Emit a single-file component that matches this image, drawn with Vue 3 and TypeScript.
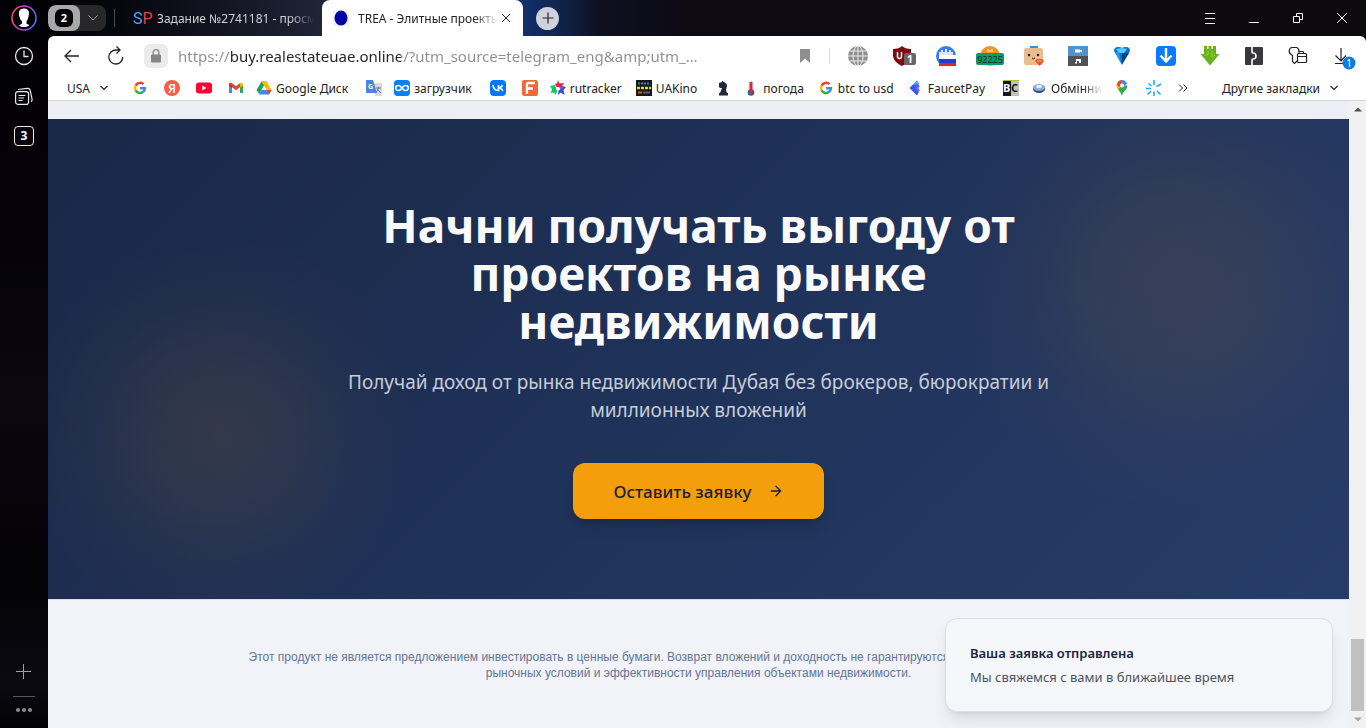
<script setup lang="ts">
import { ref } from 'vue'

const address = ref('https://buy.realestateuae.online/?utm_source=telegram_eng&amp;utm_…')
const headline = ['Начни получать выгоду от', 'проектов на рынке', 'недвижимости']
const lead = ['Получай доход от рынка недвижимости Дубая без брокеров, бюрократии и', 'миллионных вложений']
const toastOpen = ref(true)
</script>

<template>
  <div class="browser">
    <aside class="rail">
      <button class="rail-btn avatar" aria-label="Профиль">
        <svg width="28" height="28" viewBox="0 0 28 28">
          <defs>
            <linearGradient id="ring" x1="0" y1="0.3" x2="1" y2="0.6">
              <stop offset="0" stop-color="#ff4b55" /><stop offset="0.5" stop-color="#c03be8" /><stop offset="1" stop-color="#4b6cff" />
            </linearGradient>
          </defs>
          <circle cx="14" cy="14" r="12" fill="#000" stroke="url(#ring)" stroke-width="1.6" />
          <path d="M9 8c.4-2.500 2.500-3.500 5-3.500 3.200 0 5 1.500 5 4.500 0 1.500-.3 2.500-.6 3.700-.3 2-.7 3.300-1.700 4l-.2 3 2.800 1.300c-1 1.500-2.800 2-5.300 2-2.200 0-4-.4-5-1.800l3-1.500v-2.500c-1.200-.8-2-2-2.200-3.700C9 12 8.700 10 9 8z" fill="#fff" />
        </svg>
      </button>
      <button class="rail-btn" aria-label="История">
        <svg width="20" height="20" viewBox="0 0 20 20" fill="none" stroke="#e8e8ea" stroke-width="1.300"><circle cx="10" cy="10" r="8.500" /><path d="M10 4.500V10.500H14.500" /></svg>
      </button>
      <button class="rail-btn" aria-label="Коллекции">
        <svg width="20" height="20" viewBox="0 0 20 20" fill="none" stroke="#e8e8ea" stroke-width="1.200"><rect x="1.600" y="5.600" width="13" height="12.800" rx="2.500" /><path d="M4.500 9.500h7M4.500 12h5.500M4.500 14.500h4" /><path d="M4 3.500l9.500-1.200q2-.2 2.600 1.600l2 9.500q.2 1.600-1 2.400" /></svg>
      </button>
      <button class="rail-btn" aria-label="Вкладки: 3"><span class="tab-count">3</span></button>
      <span class="rail-space"></span>
      <button class="rail-btn" aria-label="Добавить">
        <svg width="16" height="16" viewBox="0 0 16 16" stroke="#a0a0a4"><path d="M7.500 0v15M0 7.500h15" /></svg>
      </button>
      <span class="rail-line"></span>
      <button class="rail-more" aria-label="Ещё"><i></i><i></i><i></i></button>
    </aside>

    <div class="main">
      <header class="tabs">
        <div class="group">
          <button class="group-num" aria-label="Группа вкладок 2"><span>2</span></button>
          <button class="group-arrow" aria-label="Список групп"><svg width="10" height="6" viewBox="0 0 10 6" fill="none" stroke="#a5a5a8"><path d="M.5 .5L5 5L9.500 .5" /></svg></button>
        </div>
        <span class="tabs-sep"></span>
        <a class="tab" href="#task"><b class="sp"><i>S</i>P</b><span class="tab-name">Задание №2741181 - просмотр</span></a>
        <a class="tab active" href="#page">
          <svg class="tab-ico" width="16" height="16" viewBox="0 0 16 16"><path fill="#f3f3f3" d="M0 0h16v16H0z" /><ellipse cx="8" cy="8" rx="6.500" ry="7.500" fill="#0303a5" /></svg>
          <span class="tab-name">TREA - Элитные проекты</span>
          <button class="tab-close" aria-label="Закрыть вкладку"><svg width="10" height="10" viewBox="0 0 10 10" stroke="#222"><path d="M1 1l8 8M9 1L1 9" /></svg></button>
        </a>
        <button class="newtab" aria-label="Новая вкладка"><svg width="12" height="12" viewBox="0 0 12 12" stroke="#222" stroke-width="1.200"><path d="M6 .5v11M.5 6h11" /></svg></button>
        <div class="window">
          <button aria-label="Меню"><svg width="12" height="12" viewBox="0 0 12 12" stroke="#eee"><path d="M1 1.500h10M1 6.500h10M1 11.500h10" /></svg></button>
          <button aria-label="Свернуть"><svg width="12" height="12" viewBox="0 0 12 12" stroke="#fff"><path d="M1 10.500h10" /></svg></button>
          <button aria-label="Восстановить"><svg width="12" height="12" viewBox="0 0 12 12" fill="none" stroke="#fff"><path d="M1.500 4.500h6v6h-6zM4.500 4V1.500h6v6H8" /></svg></button>
          <button aria-label="Закрыть"><svg width="12" height="12" viewBox="0 0 12 12" stroke="#fff"><path d="M1 1l10 10M11 1L1 11" /></svg></button>
        </div>
      </header>

      <div class="chrome">
        <div class="toolbar">
          <button class="nav" aria-label="Назад"><svg width="16" height="14" viewBox="0 0 16 14" fill="none" stroke="#222" stroke-width="1.300"><path d="M15 7H1.500M7 1L1 7l6 6" /></svg></button>
          <button class="nav" aria-label="Обновить"><svg width="18" height="20" viewBox="0 0 18 20" fill="none" stroke="#222" stroke-width="1.300"><path d="M15.800 11A7 7 0 1 1 9 4h4M9.500 .5L13 4L9.500 7.500" /></svg></button>
          <button class="lock" aria-label="Сведения о сайте"><svg width="12" height="14" viewBox="0 0 12 14"><path d="M3.200 6V3.500a2.800 2.800 0 0 1 5.600 0V6" fill="none" stroke="#858585" stroke-width="1.300" /><rect x="1" y="5.500" width="10" height="8" rx="1.200" fill="#858585" /></svg></button>
          <input v-model="address" class="address" type="text" aria-label="Адрес страницы" spellcheck="false" />
          <button class="ext" aria-label="Добавить в закладки"><svg width="12" height="14" viewBox="0 0 12 14"><path d="M1 0h10v14L6 9.500 1 14z" fill="#8e8e8e" /></svg></button>
          <span class="bar-sep"></span>
          <div class="exts">
            <button class="ext" aria-label="Сеть"><svg width="20" height="20" viewBox="0 0 20 20"><circle cx="10" cy="10" r="10" fill="#8f8f8f" /><g fill="none" stroke="#eee"><path d="M0 10h20M10 0v20M2 5h16M2 15h16" /><ellipse cx="10" cy="10" rx="5" ry="10" /></g></svg></button>
            <button class="ext" aria-label="uBlock: 1"><svg width="28" height="20" viewBox="0 0 28 20"><path d="M5 3q6 0 9-3 3 3 9 3v6c0 5-4 8.500-9 11C9 17.500 5 14 5 9z" fill="#800610" /><path d="M9.500 6v4.500q0 2 2 2t2-2V6" fill="none" stroke="#fff" stroke-width="1.500" /><rect x="16" y="7" width="12" height="12" rx="2" fill="#666" /><text x="22" y="17" text-anchor="middle" fill="#fff" font-size="11" font-weight="700">1</text></svg></button>
            <button class="ext" aria-label="VPN"><svg width="20" height="20" viewBox="0 0 20 20"><circle cx="10" cy="10" r="10" fill="#397bea" /><path d="M3 6h2V4h2v2h2V3h2v3h2V4h2v2h2v4H3z" fill="#d9e7fa" /><path fill="#fff" d="M3 9h17v4H3z" /><path fill="#243fc2" d="M3 13h17v4H3z" /><path fill="#e5232c" d="M3 17h17v3H3z" /></svg></button>
            <button class="ext" aria-label="Курс: 92225"><svg width="28" height="20" viewBox="0 0 28 20"><circle cx="14" cy="10" r="10" fill="#f6921d" /><path d="M12 3v3M14 4v2M16 3v3" stroke="#fff" /><rect y="7" width="28" height="12" rx="2" fill="#0a9b6c" /><text x="14" y="17" text-anchor="middle" fill="#082820" font-size="9">92225</text></svg></button>
            <button class="ext" aria-label="Помощник"><svg width="20" height="20" viewBox="0 0 20 20"><path d="M6 3V0h8v3" fill="#2a91f2" /><rect y="2" width="19" height="17" rx="2" fill="#e9bd92" /><circle cx="5" cy="9" r="1.200" fill="#222" /><circle cx="14" cy="9" r="1.200" fill="#222" /><path d="M8 12q1.500 1.500 3 0" stroke="#222" fill="none" /><path d="M11 15l2-2h5l2 2-4.500 5z" fill="#e65428" /><path d="M13 15h5" stroke="#ffbe7b" /></svg></button>
            <button class="ext" aria-label="Медиа"><svg width="20" height="20" viewBox="0 0 20 20"><path fill="#5391cb" d="M0 0h20v10H0z" /><path fill="#505355" d="M0 10h20v10H0z" /><path d="M7 3.500h5v1L14 3.500v3l-2-1v1H7zM8 13h5v4h-2v-2H9v2.500H7V16h1z" fill="#fff" /></svg></button>
            <button class="ext" aria-label="Алмаз"><svg width="18" height="20" viewBox="0 0 18 20"><path d="M1 5q0-4 4-4 3 0 4 1 1-1 4-1 4 0 4 4L9 19z" fill="#0872cf" /><path d="M3 3l6-1 5 1-3 4H6z" fill="#55cdfa" /><path d="M9 7h7L9 18z" fill="#064385" /><path d="M2 6l6 10L6 7z" fill="#12a8f5" /></svg></button>
            <button class="ext" aria-label="Загрузчик"><svg width="20" height="20" viewBox="0 0 20 20"><rect width="20" height="20" rx="4" fill="#087bff" /><path d="M10 2v13M4.500 9.500L10 15.500l5.500-6" fill="none" stroke="#fff" stroke-width="2.400" /></svg></button>
            <button class="ext" aria-label="Скачать видео"><svg width="20" height="20" viewBox="0 0 20 20"><path d="M4 0h3v3h1.500V0h3v3H13V0h3v8h3.500L10 19.500 .5 8H4z" fill="#67b51b" /><path d="M5 9h3V5M12 5v6l3-2" fill="none" stroke="#8fd33b" /></svg></button>
            <button class="ext" aria-label="Разделитель"><svg width="20" height="20" viewBox="0 0 20 20"><rect x="1" y="1" width="18" height="18" rx="1" fill="#39393b" /><path d="M8 1v5q0 1 1 1 3 0 3 3t-3 3q-1 0-1 1v5" fill="none" stroke="#fff" stroke-width="1.600" /></svg></button>
            <button class="ext" aria-label="Пароли"><svg width="20" height="20" viewBox="0 0 20 20" fill="none" stroke="#222" stroke-width="1.200"><path d="M9 15l-2.500 2.500-2-2V9.500C1.500 8 .8 5.500 1.500 3.500 2 2 3 1.500 4 1.500h4.500q2.500 .5 2.500 4" /><rect x="9.500" y="7.500" width="9" height="9" rx="1" /><path d="M9.500 10.500h9M11 7.500V5.500h4l1 2" /></svg></button>
            <button class="ext" aria-label="Загрузки: 1"><svg width="32" height="28" viewBox="0 0 32 28"><path d="M15 6v13M9.500 13.500L15 19l5-5.500M9 21.500h9" fill="none" stroke="#222" stroke-width="1.200" /><circle cx="23" cy="21" r="6.500" fill="#0a7be0" /><text x="23" y="25" text-anchor="middle" fill="#fff" font-size="10">1</text></svg></button>
          </div>
        </div>

        <nav class="bookmarks" aria-label="Закладки">
          <button class="folder usa">USA<svg width="8" height="6" viewBox="0 0 8 6" fill="none" stroke="#222" stroke-width="1.200"><path d="M.5 1L4 4.500 7.500 1" /></svg></button>
          <a class="bm" href="#g" aria-label="Google"><svg width="16" height="16" viewBox="0 0 16 16" fill="none" stroke-width="2.500"><path d="M11.500 4.200A5 5 0 0 0 3.600 5.600" stroke="#ea4335" /><path d="M3.600 5.600a5 5 0 0 0 0 4.800" stroke="#fbbc05" /><path d="M3.600 10.400a5 5 0 0 0 7.600 1.400" stroke="#34a853" /><path d="M11.200 11.800q1.600-1.300 1.700-3.500H8" stroke="#4285f4" /></svg></a>
          <a class="bm" href="#ya" aria-label="Яндекс"><svg width="16" height="16" viewBox="0 0 16 16"><circle cx="8" cy="8" r="8" fill="#fc5b45" /><text x="8" y="12.500" text-anchor="middle" fill="#fff" font-size="12" font-weight="600">Я</text></svg></a>
          <a class="bm" href="#yt" aria-label="YouTube"><svg width="16" height="16" viewBox="0 0 16 16"><rect y="2.500" width="16" height="11" rx="3" fill="#ff0033" /><path d="M6.300 5.500L10.500 8l-4.200 2.500z" fill="#fff" /></svg></a>
          <a class="bm" href="#gm" aria-label="Gmail"><svg width="16" height="16" viewBox="0 0 16 16"><path d="M1 4v9h3V6z" fill="#4285f4" /><path d="M12 6v7h3V4z" fill="#34a853" /><path d="M1 3.500q1-1.500 2.800-.5L8 6.300 12.200 3v4L8 10.200 1 5z" fill="#ea4335" /><path d="M12 3q2-1 3 1v1.500l-3 2z" fill="#fbbc04" /><path d="M1 4l3 2v2L1 5.500z" fill="#c5221f" /></svg></a>
          <a class="bm wide" href="#drive"><svg width="16" height="16" viewBox="0 0 16 16"><path d="M5.500 1.500h5L3.200 14 .5 10z" fill="#1da35c" /><path d="M5.500 1.500h5l5 8.500h-5z" fill="#ffba00" /><path d="M5.500 10h10L13 14.500H3z" fill="#4285f4" /><path d="M10.500 10h5L13 14.500z" fill="#ea4335" /><path d="M8 6l2.500 4h-5z" fill="#fff" /></svg>Google Диск</a>
          <a class="bm" href="#tr" aria-label="Переводчик"><svg width="16" height="16" viewBox="0 0 16 16"><path d="M6 3h10v13H9z" fill="#d8dadd" /><path d="M10 8h5M12.500 7v1q-.5 3-2.500 4M11 9l4 4" stroke="#65758b" fill="none" /><path d="M0 0h7l4 13H1q-1 0-1-1z" fill="#4a83ee" /><text x="2" y="9" font-size="7" font-weight="700" fill="#fff">G</text></svg></a>
          <a class="bm wide" href="#dl"><svg width="16" height="16" viewBox="0 0 16 16"><rect width="16" height="16" rx="3.500" fill="#087ff5" /><path d="M8 8Q6 5.200 4.200 5.500A2.500 2.500 0 0 0 4.200 10.500Q6 10.800 8 8t3.800-2.500a2.500 2.500 0 0 1 0 5Q10 10.800 8 8" fill="none" stroke="#fff" stroke-width="1.600" /></svg>загрузчик</a>
          <a class="bm" href="#vk" aria-label="ВКонтакте"><svg width="16" height="16" viewBox="0 0 16 16"><rect width="16" height="16" rx="4" fill="#07f" /><path d="M3 5q.5 5.500 5.500 5.500V5M8.500 8Q11 8 12.500 5M8.500 8q3 0 4.300 2.800" fill="none" stroke="#fff" stroke-width="1.700" /></svg></a>
          <a class="bm" href="#f" aria-label="F"><svg width="16" height="16" viewBox="0 0 16 16"><rect width="16" height="16" rx="2" fill="#f26938" /><path d="M5 14V4q0-1 1-1h7M5 8.500h6" fill="none" stroke="#fff" stroke-width="2.300" /></svg></a>
          <a class="bm wide" href="#rt"><svg width="16" height="16" viewBox="0 0 16 16"><path d="M8 0l1.500 3.500L14 3l-2.500 4h-5L5 3.500l2 0z" fill="#e52344" /><path d="M0 6l5-1 1.500 4 1 2-2 3.500-2-2-3 .5 1.500-3.500z" fill="#19c85c" /><path d="M10 7l2-1 4 1-2.500 3 1 5-4-2.500L8 15l.5-4z" fill="#2f50c7" /><path d="M6.500 7h3l1 2-2.500 2-2-1.500z" fill="#fff" /><path d="M10 6l3 1-2 3-2-3z" fill="#a843ce" /></svg>rutracker</a>
          <a class="bm wide" href="#uk"><svg width="16" height="16" viewBox="0 0 16 16"><path fill="#171717" d="M0 0h16v16H0z" /><path d="M2 3.500h12" stroke="#1688d0" stroke-width="2" stroke-dasharray="2 1" /><path d="M1 8h14" stroke="#f3d414" stroke-width="2.500" stroke-dasharray="3 1" /><path d="M2 12.500h4" stroke="#d25d1a" stroke-width="2" /><path d="M7 12.500h7" stroke="#56636b" stroke-width="2" /></svg>UAKino</a>
          <a class="bm" href="#chess" aria-label="Шахматы"><svg width="16" height="16" viewBox="0 0 16 16"><path d="M4 3l3-1V.5L9 2q3 1 3 4l-1 4 1 3h1v2.500H4V13h1l2-5H5L4 7z" fill="#24283a" /></svg></a>
          <a class="bm wide" href="#weather"><svg width="16" height="16" viewBox="0 0 16 16"><rect x="5.500" y="1" width="5" height="11" rx="2.500" fill="#b9d8f0" /><circle cx="8" cy="12.500" r="3.300" fill="#1466b5" /><path d="M8 2v10" stroke="#e22a28" stroke-width="2.600" /><circle cx="8" cy="12.300" r="2" fill="#e22a28" /></svg>погода</a>
          <a class="bm wide" href="#btc"><svg width="16" height="16" viewBox="0 0 16 16" fill="none" stroke-width="2.500"><path d="M11.500 4.200A5 5 0 0 0 3.600 5.600" stroke="#ea4335" /><path d="M3.600 5.600a5 5 0 0 0 0 4.800" stroke="#fbbc05" /><path d="M3.600 10.400a5 5 0 0 0 7.600 1.400" stroke="#34a853" /><path d="M11.200 11.800q1.600-1.300 1.700-3.500H8" stroke="#4285f4" /></svg>btc to usd</a>
          <a class="bm wide" href="#fp"><svg width="16" height="16" viewBox="0 0 16 16"><path d="M9 .5L1.500 8 9 15.500l1.500-3V3z" fill="#3657ed" /><path d="M9 .5L5 5l6-1z" fill="#35b9f6" /><path d="M7 8l3-3.500L12 6l-2 2.300 2 2L10 12z" fill="#6f63f7" /></svg>FaucetPay</a>
          <a class="bm" href="#bc" aria-label="BC"><svg width="16" height="16" viewBox="0 0 16 16"><path fill="#16191b" d="M0 0h8v16H0z" /><path fill="#bfc2b9" d="M8 0h8v16H8z" /><path d="M0 .5h16" stroke="#a5c42d" /><text x="0" y="12" font-size="11" font-weight="700" fill="#fff">B</text><text x="8" y="12" font-size="11" font-weight="700" fill="#111">C</text></svg></a>
          <a class="bm wide rate" href="#ex"><svg width="16" height="16" viewBox="0 0 16 16"><ellipse cx="8" cy="9" rx="6" ry="4" fill="#35467f" /><ellipse cx="8" cy="7.500" rx="6" ry="3.500" fill="#8ba9dd" /><ellipse cx="8" cy="6.500" rx="3" ry="1.800" fill="#e2edfb" /></svg><span class="cut">Обмінник</span></a>
          <a class="bm" href="#maps" aria-label="Карты"><svg width="16" height="16" viewBox="0 0 16 16"><path d="M8 16q-1-3-3-5.500T2.500 5.500h11q0 3-2.500 5T8 16z" fill="#34a853" /><path d="M2.500 5.500A5.500 5.500 0 0 1 8 0v5.500L4 9.500Q2.500 7.500 2.500 5.500z" fill="#fbbc04" /><path d="M3.800 2A5.500 5.500 0 0 1 8 0l1 4-4 3-2-2z" fill="#ea4335" /><path d="M8 0a5.500 5.500 0 0 1 5 3.500L9 7 7 4z" fill="#4285f4" /><circle cx="8" cy="5.500" r="2" fill="#fff" /></svg></a>
          <a class="bm" href="#spark" aria-label="Искра"><svg width="16" height="16" viewBox="0 0 16 16" stroke="#25a9ff" stroke-width="1.600"><path d="M8 0v5M8 11.500V16M0 8.500h5M11 11l3.500 3.500M5 11l-3.500 3.500M10.500 6.500L15 4M5.500 6L2.500 3.500" /></svg></a>
          <button class="folder more" aria-label="Ещё закладки"><svg width="10" height="8" viewBox="0 0 10 8" fill="none" stroke="#222"><path d="M1 .5L4.500 4 1 7.500M5.500 .5L9 4 5.500 7.500" /></svg></button>
          <button class="folder other">Другие закладки<svg width="8" height="6" viewBox="0 0 8 6" fill="none" stroke="#222" stroke-width="1.200"><path d="M.5 1L4 4.500 7.500 1" /></svg></button>
        </nav>
      </div>

      <div class="view">
        <main class="page">
          <section class="hero">
            <h1><span v-for="line in headline" :key="line">{{ line }}</span></h1>
            <p><span v-for="line in lead" :key="line">{{ line }}</span></p>
            <button class="cta">Оставить заявку<svg width="16" height="16" viewBox="0 0 24 24" fill="none" stroke="currentColor" stroke-width="2" stroke-linecap="round" stroke-linejoin="round"><path d="M5 12h14M12 5l7 7-7 7" /></svg></button>
          </section>
          <footer class="legal">
            <p>
              <span>Этот продукт не является предложением инвестировать в ценные бумаги. Возврат вложений и доходность не гарантируются и могут меняться в зависимости от</span>
              <span>рыночных условий и эффективности управления объектами недвижимости.</span>
            </p>
          </footer>
          <div v-if="toastOpen" class="toast" role="status">
            <strong>Ваша заявка отправлена</strong>
            <span>Мы свяжемся с вами в ближайшее время</span>
          </div>
        </main>
        <div class="scroll" aria-hidden="true">
          <svg width="17" height="17" viewBox="0 0 17 17"><path d="M5 10.500h8L9 6.500z" fill="#505050" /></svg>
          <span class="thumb"></span>
          <svg width="17" height="17" viewBox="0 0 17 17"><path d="M5 6.500h8l-4 4z" fill="#a3a3a3" /></svg>
        </div>
      </div>
    </div>
  </div>
</template>

<style>
body { background: #050308; }
</style>

<style scoped>
* { box-sizing: border-box; }
.browser { display: flex; min-height: 100vh; background: linear-gradient(180deg, #020106 0, #040208 30%, #0a0710 55%, #030204 80%, #0b0a13 94%, #030204 100%); font-family: "Noto Sans", "Open Sans", sans-serif; font-size: 12px; color: #222; }
button { padding: 0; border: 0; background: none; font: inherit; color: inherit; display: flex; align-items: center; justify-content: center; cursor: pointer; }
a { color: inherit; text-decoration: none; }
svg { display: block; flex: none; }

.rail { width: 48px; flex: none; display: flex; flex-direction: column; align-items: center; }
.rail-btn { width: 40px; height: 40px; flex: none; }
.avatar { height: 36px; }
.tab-count { width: 20px; height: 20px; border: 1px solid #eee; border-radius: 4px; color: #fff; font-weight: 700; font-size: 12px; line-height: 18px; }
.rail-space { flex: 1; }
.rail-line { width: 22px; height: 1px; background: #57575b; margin-top: 4px; }
.rail-more { gap: 2px; height: 27px; padding-bottom: 1px; margin-bottom: 4px; }
.rail-more i { width: 4px; height: 4px; border-radius: 2px; background: #8c8c90; }

.main { flex: 1; min-width: 0; display: flex; flex-direction: column; }
.tabs { height: 36px; display: flex; align-items: center; background: linear-gradient(90deg, #020207 0, #090a12 100px, #202437 274px, #12306c 476px, #11254e 510px, #0e1021 550px, #0d0a13 640px, #0d090e 100%); color: #d0d0d2; }
.group { display: flex; width: 58px; height: 26px; border-radius: 8px; background: #28282b; overflow: hidden; }
.group-num { width: 32px; border-radius: 8px; background: #a8a8aa; }
.group-num span { width: 18px; height: 18px; border-radius: 6px; background: #000; color: #fff; font-weight: 700; font-size: 11px; line-height: 18px; }
.group-arrow { flex: 1; }
.tabs-sep { width: 1px; height: 18px; background: #48484c; margin: 0 18px 0 8px; }
.tab { display: flex; align-items: center; height: 36px; width: 189px; padding-right: 8px; }
.sp { width: 24px; font-size: 16px; font-weight: 400; color: #d54848; font-family: Roboto, sans-serif; flex: none; }
.sp i { font-style: normal; color: #4ba4e5; }
.tab-name { flex: 1; min-width: 0; white-space: nowrap; overflow: hidden; font-size: 12px; -webkit-mask-image: linear-gradient(90deg, #000 calc(100% - 24px), transparent); mask-image: linear-gradient(90deg, #000 calc(100% - 24px), transparent); }
.tab.active { width: 201px; padding: 0 10px 0 11px; background: #fff; color: #222; border-radius: 8px 8px 0 0; }
.tab-ico { margin-right: 9px; }
.tab-close { width: 14px; height: 20px; margin-left: 1px; }
.newtab { width: 23px; height: 23px; border-radius: 12px; background: #cfd2dc; margin-left: 13px; }
.window { margin-left: auto; display: flex; margin-right: 2px; }
.window button { width: 44px; height: 36px; }

.chrome { background: #fff; border-radius: 6px 6px 0 0; border-bottom: 1px solid #d5d5dc; }
.toolbar { height: 40px; display: flex; align-items: center; padding: 0 2px; }
.nav { width: 44px; height: 40px; }
.lock { width: 24px; height: 24px; border-radius: 6px; background: #ebebeb; margin-left: 6px; flex: none; }
.address { flex: 1; min-width: 0; height: 32px; margin-left: 10px; padding: 0; border: 0; outline: 0; font-family: "Noto Sans", "Open Sans", sans-serif; font-size: 15px; color: transparent; background: linear-gradient(90deg, #8e8e8e 52px, #222 52px, #222 223px, #8e8e8e 223px); -webkit-background-clip: text; background-clip: text; }
.ext { width: 44px; height: 40px; flex: none; }
.bar-sep { width: 1px; height: 16px; background: #ddd; margin: 0 6px 0 2px; }
.exts { display: flex; }

.bookmarks { height: 24px; display: flex; align-items: center; padding: 0 28px 0 19px; white-space: nowrap; overflow: hidden; }
.folder { gap: 10px; font-size: 12px; }
.usa { margin-right: 16px; }
.bm { display: flex; align-items: center; gap: 4px; margin: 0 8px; flex: none; }
.bm.wide { margin: 0 10px 0 4px; }
.bm.rate { margin-right: 3px; }
.cut { width: 52px; overflow: hidden; -webkit-mask-image: linear-gradient(90deg, #000 32px, transparent); mask-image: linear-gradient(90deg, #000 32px, transparent); }
.more { margin-left: 8px; }
.other { margin-left: auto; }

.view { flex: 1; display: flex; }
.page { flex: 1; min-width: 0; position: relative; padding-top: 18px; background: #eeeff4; display: flex; flex-direction: column; }
.hero { padding: 82px 24px 80px; display: flex; flex-direction: column; align-items: center; text-align: center; color: #fafafa;
  background:
    radial-gradient(circle 200px at 170px 315px, rgba(245, 158, 11, .1) 0, rgba(245, 158, 11, .07) 35%, rgba(245, 158, 11, .025) 70%, transparent 100%),
    radial-gradient(circle 230px at calc(100% - 170px) 165px, rgba(245, 158, 11, .09) 0, rgba(245, 158, 11, .07) 35%, rgba(245, 158, 11, .025) 70%, transparent 100%),
    linear-gradient(135deg, #1a2847 0, #1f3259 50%, #283c69 100%); }
h1 { margin: 0; font-size: 46px; line-height: 48px; font-weight: 700; }
h1 span, .hero p span, .legal span { display: block; white-space: nowrap; }
.hero p { margin: 23px 0 0; font-size: 19px; line-height: 28px; color: #c7ccd6; }
.cta { height: 56px; padding: 0 40px; gap: 16px; margin-top: 39px; border-radius: 12px; background: #f59e0b; color: #16233b; font-size: 17px; font-weight: 500; box-shadow: 0 10px 15px -3px rgba(0, 0, 0, .16), 0 4px 6px -4px rgba(0, 0, 0, .16); }
.legal { flex: 1; background: #f1f3f8; border-top: 1px solid #d8dde8; padding: 49px 24px 46px; text-align: center; color: #64759a; overflow: hidden; }
.legal p { margin: 0; font-family: "Liberation Sans", "Noto Sans", sans-serif; font-size: 12px; line-height: 16px; display: flex; flex-direction: column; align-items: center; }
.toast { position: absolute; right: 16px; bottom: 16px; width: 388px; padding: 24px; border: 1px solid #dcdfea; border-radius: 12px; background: #f6f7fa; box-shadow: 0 10px 15px -3px rgba(0, 0, 0, .1), 0 4px 6px -4px rgba(0, 0, 0, .1); display: flex; flex-direction: column; gap: 4px; font-size: 13px; line-height: 20px; color: #4b5363; }
.toast strong { font-weight: 600; color: #1a2540; }
.scroll { width: 17px; background: #f1f1f1; display: flex; flex-direction: column; }
.thumb { width: 13px; height: 72px; margin: auto 2px 0; background: #c1c1c1; }
</style>
